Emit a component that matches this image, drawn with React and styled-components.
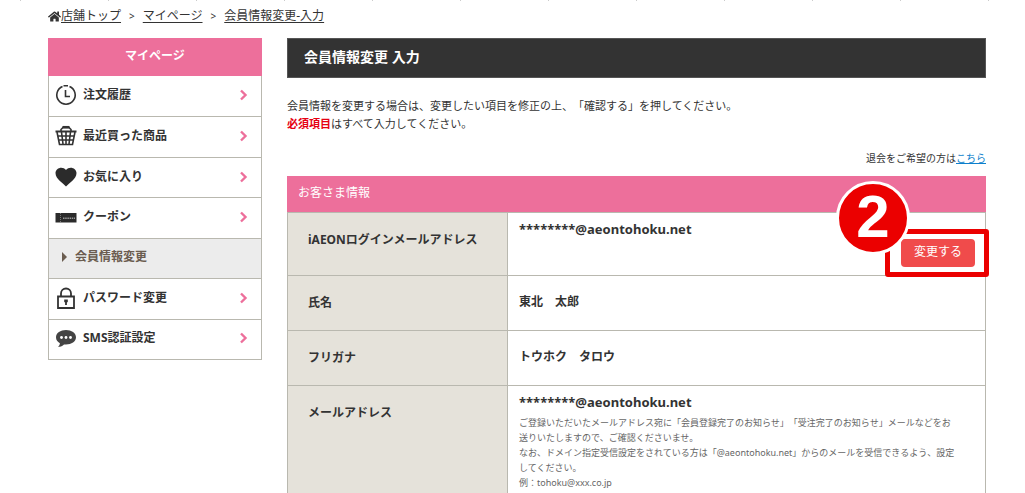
import React from "react";
import styled, { createGlobalStyle } from "styled-components";
import { FaHome } from "react-icons/fa";

const GlobalStyle = createGlobalStyle`
  * {
    box-sizing: border-box;
  }
  body {
    margin: 0;
    overflow: hidden;
    background: #fff;
    color: #333;
    font-family: "Noto Sans", "Noto Sans CJK JP", sans-serif;
    font-size: 12px;
    line-height: 18px;
    text-spacing-trim: space-all;
  }
`;

const Page = styled.div`
  padding: 7px 39px 0 48px;
  background: linear-gradient(90deg, #ccc 1px, transparent 1px) 20px 0 / 88px 1px repeat-x;
`;

const Breadcrumb = styled.nav`
  display: flex;
  align-items: center;
  gap: 8px;
  margin-bottom: 13px;

  a {
    color: #333;
    text-underline-offset: 2px;
  }
`;

const Home = styled.span`
  display: flex;
  align-items: center;
`;

const Separator = styled.span`
  font-size: 10px;
`;

const Columns = styled.div`
  display: flex;
  align-items: flex-start;
  gap: 25px;
`;

const Side = styled.aside`
  flex: 0 0 214px;
  border: 1px solid #b9b8af;
  border-top: 0;
`;

const SideTitle = styled.h2`
  margin: 0 -1px;
  padding: 9px 0 11px;
  background: #ed6f9b;
  color: #fff;
  font-size: 12px;
  line-height: 18px;
  text-align: center;
`;

const Menu = styled.ul`
  display: grid;
  grid-auto-rows: 1fr;
  min-height: 283px;
  margin: 0;
  padding: 0;
  list-style: none;
`;

const MenuItem = styled.li`
  display: flex;
  background: ${props => props.$current ? "#ececec" : "#fff"};

  & + & {
    border-top: 1px solid #b9b8af;
  }
`;

const MenuLink = styled.a`
  display: flex;
  flex: 1;
  align-items: center;
  gap: 6px;
  padding: 0 12px 2px 6px;
  color: ${props => props.$current ? "#6b5d50" : "#333"};
  font-weight: bold;
  text-decoration: none;

  span {
    flex: 1;
  }
`;

const Main = styled.main`
  flex: 1;
  min-width: 0;
`;

const Title = styled.h1`
  margin: 0 0 19px;
  padding: 8px 16px 11px;
  border: 1px solid #555;
  background: #333;
  color: #fff;
  font-size: 14px;
  line-height: 19px;
`;

const Lead = styled.p`
  margin: 0;
  font-size: 11px;
  line-height: 18px;
`;

const Required = styled.strong`
  color: #e60012;
`;

const Leave = styled.p`
  margin: 16px 0 9px;
  font-size: 10px;
  line-height: 18px;
  text-align: right;

  a {
    color: #0d7fcc;
  }
`;

const Info = styled.table`
  width: 100%;
  border-collapse: collapse;
  table-layout: fixed;

  caption {
    padding: 8px 11px 10px;
    background: #ed6f9b;
    color: #fff;
    text-align: left;
  }
`;

const Label = styled.th`
  width: 220px;
  padding: 18px 20px;
  border: 1px solid #b9b8af;
  background: #e5e2da;
  text-align: left;
  vertical-align: top;
`;

const Value = styled.td`
  position: relative;
  padding: ${props => props.$top ? "7px" : "17px"} 10px 8px 11px;
  border: 1px solid #b9b8af;
  font-weight: bold;
  vertical-align: top;
`;

const Email = styled.div`
  font-size: 13px;
`;

const Note = styled.p`
  margin: 4px 0 0;
  padding-right: 20px;
  color: #666;
  font-size: 9px;
  font-weight: normal;
  line-height: 15px;
`;

const ActionRow = styled.div`
  display: flex;
  justify-content: flex-end;
  padding-top: 1px;
`;

const ChangeButton = styled.button`
  width: 74px;
  height: 28px;
  padding: 0 0 2px;
  border: 0;
  border-radius: 4px;
  background: #f04b4b;
  color: #fff;
  font: inherit;
  font-weight: normal;
`;

const Highlight = styled.div`
  position: absolute;
  right: -4px;
  bottom: -2px;
  width: 104px;
  height: 48px;
  border: 5px solid #eb0000;
  border-radius: 3px;
  pointer-events: none;
`;

const Step = styled.div`
  position: absolute;
  top: -32px;
  right: 75px;
  display: flex;
  align-items: center;
  justify-content: center;
  width: 74px;
  height: 74px;
  padding-bottom: 2px;
  border: 3px solid #fff;
  border-radius: 50%;
  background: #eb0000;
  color: #fff;
  font: bold 60px/60px "Liberation Sans", sans-serif;
`;

const Icon = ({ children }) => (
  <svg width="22" height="22" viewBox="0 0 22 22" fill="none" stroke="#333" strokeWidth="1.6" aria-hidden="true">
    {children}
  </svg>
);

const ClockIcon = () => (
  <Icon>
    <path d="M7.500 2.500A9.200 9.200 0 1 0 14.500 2.500M8.500 1.700h4.500M5.700 3.400l-1 .7" />
    <path d="M10.500 6v6.500H15" />
  </Icon>
);

const BasketIcon = () => (
  <Icon>
    <path d="M6 6V4.500L8 2.500h6l2 2V6" />
    <path d="M7.500 2.200h7" strokeWidth="2.500" />
    <path d="M.5 6.500h21" strokeWidth="2" />
    <path d="M2 7l2.500 12.500h13L20 7M3 11h16M4 15h14M6.500 7l1.500 12M11 7v12M15.500 7L14 19" />
  </Icon>
);

const HeartIcon = () => (
  <Icon>
    <path fill="#2b2b2b" stroke="none" d="M11 20.500C8 17 .5 13 .5 7c0-5 7-7.500 10.500-3C14.500-.5 21.500 2 21.500 7c0 6-7.500 10-10.500 13.500z" />
  </Icon>
);

const CouponIcon = () => (
  <Icon>
    <path fill="#2b2b2b" stroke="none" d="M.5 7h21v9.500H.5z" />
    <path stroke="#777" strokeWidth="1" strokeDasharray="1 1" d="M5.500 7v9.500" />
    <path stroke="#999" strokeWidth="1.500" strokeDasharray="1.500 .7" d="M8 12.200h12" />
  </Icon>
);

const LockIcon = () => (
  <Icon>
    <path d="M3 9.500h16v11.500H3zM6 9V6.500a5 5 0 0 1 10 0V9" strokeWidth="1.800" />
    <path fill="#333" stroke="none" d="M9.200 12.500h3.600v2.500l-.9.500V18h-1.800v-2.500l-.9-.5z" />
  </Icon>
);

const BubbleIcon = () => (
  <Icon>
    <path fill="#444" stroke="none" d="M11 3c5.500 0 10 3 10 7.300s-4.500 7.200-10 7.200l-2-.1c-1.500 1.500-3 2.300-6 2.300 1.200-1 1.800-2 1.900-3.500C2.500 15 1 13 1 10.300 1 6 5.500 3 11 3z" />
    <g fill="#fff" stroke="none">
      <circle cx="6.500" cy="10.500" r="1.400" />
      <circle cx="11" cy="10.500" r="1.400" />
      <circle cx="15.500" cy="10.500" r="1.400" />
    </g>
  </Icon>
);

const Chevron = () => (
  <svg width="10" height="12" viewBox="0 0 10 12" fill="none" stroke="#ed6f9b" strokeWidth="2.400" aria-hidden="true">
    <path d="M2 1.500l4.500 4.500-4.500 4.500" />
  </svg>
);

const CurrentMark = () => (
  <svg width="14" height="12" viewBox="0 0 14 12" aria-hidden="true">
    <path fill="#6b5d50" d="M7 1l5 5-5 5z" />
  </svg>
);

const menu = [
  { label: "注文履歴", icon: ClockIcon },
  { label: "最近買った商品", icon: BasketIcon },
  { label: "お気に入り", icon: HeartIcon },
  { label: "クーポン", icon: CouponIcon },
  { label: "会員情報変更", icon: CurrentMark, current: true },
  { label: "パスワード変更", icon: LockIcon },
  { label: "SMS認証設定", icon: BubbleIcon },
];

function SideMenu() {
  const items = menu.map(({ label, icon: ItemIcon, current }) => (
    <MenuItem key={label} $current={current}>
      <MenuLink href="#" $current={current}>
        <ItemIcon />
        <span>{label}</span>
        {!current && <Chevron />}
      </MenuLink>
    </MenuItem>
  ));

  return (
    <Side>
      <SideTitle>マイページ</SideTitle>
      <Menu>{items}</Menu>
    </Side>
  );
}

function App() {
  return (
    <Page>
      <GlobalStyle />
      <Breadcrumb>
        <Home><FaHome size={13} /><a href="#">店舗トップ</a></Home>
        <Separator>&gt;</Separator>
        <a href="#">マイページ</a>
        <Separator>&gt;</Separator>
        <a href="#">会員情報変更-入力</a>
      </Breadcrumb>
      <Columns>
        <SideMenu />
        <Main>
          <Title>会員情報変更 入力</Title>
          <Lead>会員情報を変更する場合は、変更したい項目を修正の上、「確認する」を押してください。</Lead>
          <Lead><Required>必須項目</Required>はすべて入力してください。</Lead>
          <Leave>退会をご希望の方は<a href="#">こちら</a></Leave>
          <Info>
            <caption>お客さま情報</caption>
            <tbody>
              <tr>
                <Label scope="row">iAEONログインメールアドレス</Label>
                <Value $top>
                  <Email>********@aeontohoku.net</Email>
                  <ActionRow>
                    <ChangeButton type="button">変更する</ChangeButton>
                  </ActionRow>
                  <Highlight />
                  <Step>2</Step>
                </Value>
              </tr>
              <tr>
                <Label scope="row">氏名</Label>
                <Value>東北　太郎</Value>
              </tr>
              <tr>
                <Label scope="row">フリガナ</Label>
                <Value>トウホク　タロウ</Value>
              </tr>
              <tr>
                <Label scope="row">メールアドレス</Label>
                <Value $top>
                  <Email>********@aeontohoku.net</Email>
                  <Note>
                    ご登録いただいたメールアドレス宛に「会員登録完了のお知らせ」「受注完了のお知らせ」メールなどをお送りいたしますので、ご確認くださいませ。<br />
                    なお、ドメイン指定受信設定をされている方は「@aeontohoku.net」からのメールを受信できるよう、設定してください。<br />
                    例：tohoku@xxx.co.jp
                  </Note>
                </Value>
              </tr>
            </tbody>
          </Info>
        </Main>
      </Columns>
    </Page>
  );
}

export default App;
